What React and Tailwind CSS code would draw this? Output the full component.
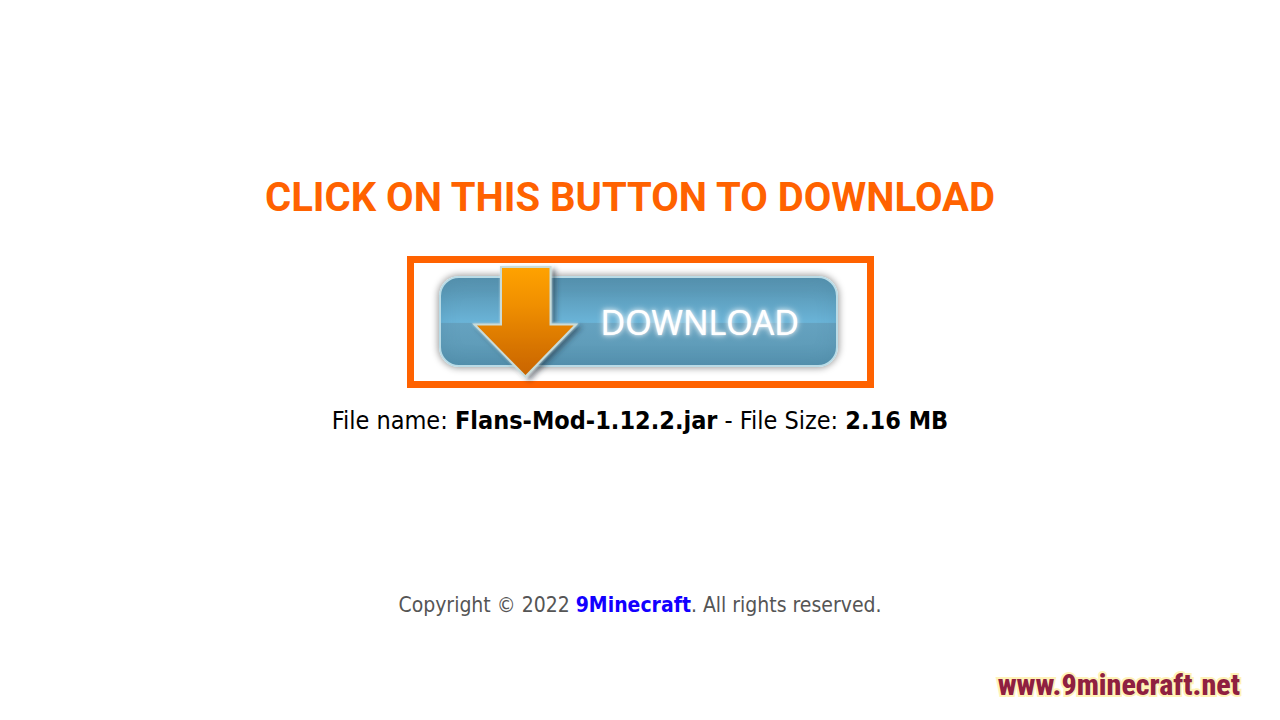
import { useState } from 'react';

const file = {
    name: 'Flans-Mod-1.12.2.jar',
    size: '2.16 MB',
};

function ArrowIcon() {
    return (
        <svg
            className="absolute left-7 -top-3.5 w-[116px] h-[116px] overflow-visible pointer-events-none"
            viewBox="0 0 116 116"
            aria-hidden="true"
        >
            <defs>
                <linearGradient id="arrow-fill" x1="0" y1="0" x2="0" y2="1">
                    <stop offset="0" stopColor="#ffa200" />
                    <stop offset="0.35" stopColor="#f08f00" />
                    <stop offset="0.75" stopColor="#d67300" />
                    <stop offset="1" stopColor="#c96400" />
                </linearGradient>
                <filter id="arrow-shadow" x="-20%" y="-20%" width="150%" height="150%">
                    <feDropShadow dx="0" dy="0" stdDeviation="1" floodColor="#d5eaf0" floodOpacity="0.7" />
                    <feDropShadow dx="4" dy="3" stdDeviation="2.5" floodColor="#1c2c36" floodOpacity="0.5" />
                </filter>
            </defs>
            <path
                d="M32 3H81.500V60.500H107L56.500 112.500L5.500 60.500H32Z"
                fill="url(#arrow-fill)"
                stroke="#c9dcd9"
                strokeWidth="2"
                filter="url(#arrow-shadow)"
            />
        </svg>
    );
}

function DownloadButton({ onClick }) {
    return (
        <button
            type="button"
            onClick={onClick}
            className="relative flex items-center w-[399px] h-[91px] pl-40 pt-0.5 rounded-[20px] border-2 border-[#b9dbe6] bg-[linear-gradient(to_bottom,#5793b0_0%,#5b9ab8_15%,#6ab4d8_51%,#65a2c0_52%,#609dba_75%,#5592af_100%)] shadow-[0_0_7px_1px_rgba(0,0,0,0.4),inset_0_0_20px_rgba(60,115,140,0.2)] cursor-pointer"
        >
            <ArrowIcon />
            <span className="font-['Open_Sans','Noto_Sans',sans-serif] text-[34px] leading-none text-white [text-shadow:0_0_1px_#ffffff,0_0_4px_rgba(255,255,255,0.7),0_0_7px_rgba(255,255,255,0.8)]">
                DOWNLOAD
            </span>
        </button>
    );
}

export default function App() {
    const [started, setStarted] = useState(false);

    return (
        <div className="min-h-screen flex flex-col bg-white font-['DejaVu_Sans_Condensed','Noto_Sans',sans-serif]">
            <main className="flex flex-col items-center pt-[174px]" aria-busy={started}>
                <h1 className="pr-5 font-[Roboto,sans-serif] font-bold text-[40px] leading-12 text-[#ff6200]">
                    CLICK ON THIS BUTTON TO DOWNLOAD
                </h1>

                <div className="mt-[34px] w-[467px] h-[132px] pr-1 pb-0.5 border-[7px] border-[#ff6200] flex items-center justify-center">
                    <DownloadButton onClick={() => setStarted(true)} />
                </div>

                <p className="mt-[17px] text-[25px] leading-8 text-black">
                    File name: <strong>{file.name}</strong> - File Size: <strong>{file.size}</strong>
                </p>

                <p className="mt-[152px] text-[21px] leading-8 text-[#555555]">
                    Copyright © 2022{' '}
                    <a href="#home" className="font-bold text-[#1200ff]">9Minecraft</a>
                    . All rights reserved.
                </p>
            </main>

            <footer className="mt-auto flex justify-end pr-10 pb-[15px]">
                <a
                    href="#site"
                    className="font-['Roboto_Condensed','Liberation_Sans_Narrow',sans-serif] font-extrabold text-[30px] leading-10 text-[#8f2040] [-webkit-text-stroke:4px_#fff3b8] [paint-order:stroke_fill]"
                >
                    www.9minecraft.net
                </a>
            </footer>
        </div>
    );
}
